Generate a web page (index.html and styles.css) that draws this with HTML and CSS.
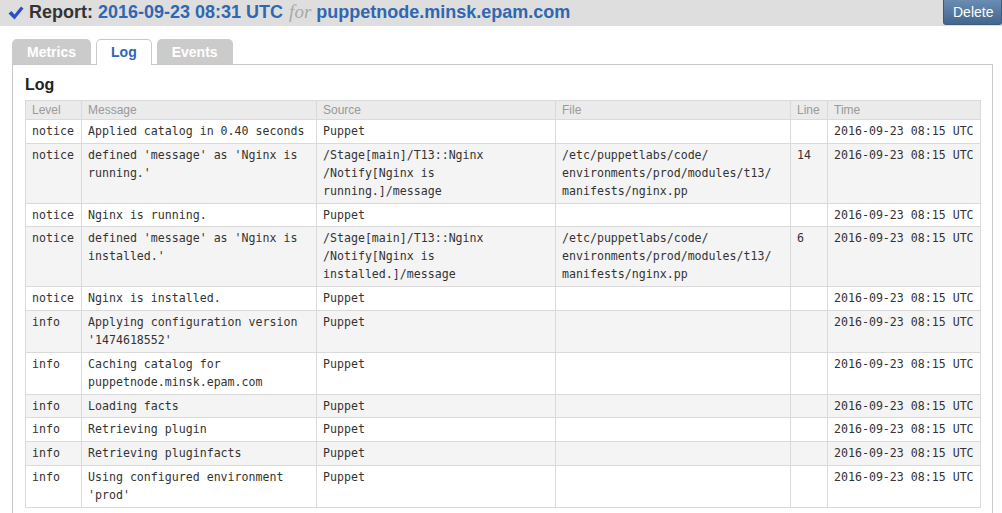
FILE: index.html
```html
<!DOCTYPE html>
<html>
<head>
<meta charset="utf-8">
<link rel="stylesheet" href="styles.css">
</head>
<body>
<div class="topbar">
  <h1 class="title">
    <svg class="check" width="16" height="14" viewBox="0 0 16 14"><path d="M0.5 7.5 L3.5 5 L6.5 8.5 L13 0.5 L15.5 2.5 L6.5 13.5 Z" fill="#2b4fc4"/></svg>
    <span class="label">Report:</span>
    <a class="link">2016-09-23 08:31 UTC</a>
    <span class="for">for</span>
    <a class="link">puppetnode.minsk.epam.com</a>
  </h1>
  <button class="delete">Delete</button>
</div>
<div class="tabs">
  <div class="tab">Metrics</div>
  <div class="tab active">Log</div>
  <div class="tab">Events</div>
</div>
<div class="panel">
  <h2 class="panel-title">Log</h2>
  <table class="log">
    <colgroup>
      <col class="c-level"><col class="c-msg"><col class="c-src"><col class="c-file"><col class="c-line"><col class="c-time">
    </colgroup>
    <thead>
      <tr><th>Level</th><th>Message</th><th>Source</th><th>File</th><th>Line</th><th>Time</th></tr>
    </thead>
    <tbody>
      <tr><td>notice</td><td>Applied catalog in 0.40 seconds</td><td>Puppet</td><td></td><td></td><td>2016-09-23 08:15 UTC</td></tr>
      <tr><td>notice</td><td>defined 'message' as 'Nginx is running.'</td><td>/Stage[main]/T13::Nginx /Notify[Nginx is running.]/message</td><td>/etc/puppetlabs/code/ environments/prod/modules/t13/ manifests/nginx.pp</td><td>14</td><td>2016-09-23 08:15 UTC</td></tr>
      <tr><td>notice</td><td>Nginx is running.</td><td>Puppet</td><td></td><td></td><td>2016-09-23 08:15 UTC</td></tr>
      <tr><td>notice</td><td>defined 'message' as 'Nginx is installed.'</td><td>/Stage[main]/T13::Nginx /Notify[Nginx is installed.]/message</td><td>/etc/puppetlabs/code/ environments/prod/modules/t13/ manifests/nginx.pp</td><td>6</td><td>2016-09-23 08:15 UTC</td></tr>
      <tr><td>notice</td><td>Nginx is installed.</td><td>Puppet</td><td></td><td></td><td>2016-09-23 08:15 UTC</td></tr>
      <tr><td>info</td><td>Applying configuration version '1474618552'</td><td>Puppet</td><td></td><td></td><td>2016-09-23 08:15 UTC</td></tr>
      <tr><td>info</td><td>Caching catalog for puppetnode.minsk.epam.com</td><td>Puppet</td><td></td><td></td><td>2016-09-23 08:15 UTC</td></tr>
      <tr><td>info</td><td>Loading facts</td><td>Puppet</td><td></td><td></td><td>2016-09-23 08:15 UTC</td></tr>
      <tr><td>info</td><td>Retrieving plugin</td><td>Puppet</td><td></td><td></td><td>2016-09-23 08:15 UTC</td></tr>
      <tr><td>info</td><td>Retrieving pluginfacts</td><td>Puppet</td><td></td><td></td><td>2016-09-23 08:15 UTC</td></tr>
      <tr><td>info</td><td>Using configured environment 'prod'</td><td>Puppet</td><td></td><td></td><td>2016-09-23 08:15 UTC</td></tr>
    </tbody>
  </table>
</div>
</body>
</html>
```

FILE: styles.css
```css
html, body {
  margin: 0;
  padding: 0;
  background: #fff;
  font-family: "Liberation Sans", Arial, sans-serif;
  color: #333;
}
body {
  overflow: hidden;
}
.topbar {
  display: flex;
  align-items: flex-start;
  justify-content: space-between;
  background: #dedede;
  height: 26px;
}
.title {
  margin: 0;
  padding: 0 0 0 8px;
  display: flex;
  align-items: center;
  height: 24px;
  font-size: 18px;
  font-weight: bold;
  white-space: nowrap;
}
.check {
  margin-right: 5px;
  margin-top: 2px;
}
.label {
  color: #333;
  margin-right: 5px;
}
.link {
  color: #2f67b1;
}
.for {
  font-family: "Liberation Serif", serif;
  font-style: italic;
  font-weight: normal;
  color: #a9a9a9;
  margin: 0 5px 0 6px;
  font-size: 19px;
}
.delete {
  margin: 0;
  width: 59px;
  height: 25px;
  border: 1px solid #3b5a7f;
  border-top: none;
  border-radius: 0 0 3px 3px;
  background: linear-gradient(#6a8db4, #44658e);
  color: #fff;
  font-family: "Liberation Sans", Arial, sans-serif;
  font-size: 14px;
  text-align: left;
  padding: 0 0 0 9px;
}
.tabs {
  display: flex;
  gap: 5px;
  margin: 13px 0 0 12px;
  position: relative;
  z-index: 1;
}
.tab {
  height: 25px;
  line-height: 26px;
  padding: 0 15px;
  background: #cbcbcb;
  color: #fff;
  font-weight: bold;
  font-size: 14px;
  border-radius: 5px 5px 0 0;
  box-sizing: border-box;
}
.tab.active {
  background: #fff;
  color: #2f67b1;
  border: 1px solid #c8c8c8;
  border-bottom: none;
  height: 26px;
  line-height: 25px;
  padding: 0 14px;
}
.panel {
  margin: -1px 9px 0 12px;
  border: 1px solid #c8c8c8;
  border-bottom: none;
  padding: 11px 12px 30px 12px;
}
.panel-title {
  margin: 0 0 6px 0;
  font-size: 16px;
  line-height: 18px;
  font-weight: bold;
  color: #222;
}
.log {
  border-collapse: collapse;
  table-layout: fixed;
  width: 955px;
}
.c-level { width: 56px; }
.c-msg { width: 235px; }
.c-src { width: 239px; }
.c-file { width: 235px; }
.c-line { width: 37px; }
.c-time { width: 153px; }
.log th {
  background: #ebebeb;
  color: #999;
  font-weight: normal;
  font-size: 12px;
  line-height: 17px;
  text-align: left;
  padding: 1px 6px 0 6px;
  border: 1px solid #dadada;
}
.log td {
  font-family: "DejaVu Sans Mono", monospace;
  font-size: 11.6px;
  line-height: 18px;
  color: #333;
  vertical-align: top;
  padding: 2px 6px 2.8px 6px;
  border: 1px solid #dadada;
  word-wrap: break-word;
}
.log tbody tr:nth-child(even) td {
  background: #f4f4f4;
}
```
